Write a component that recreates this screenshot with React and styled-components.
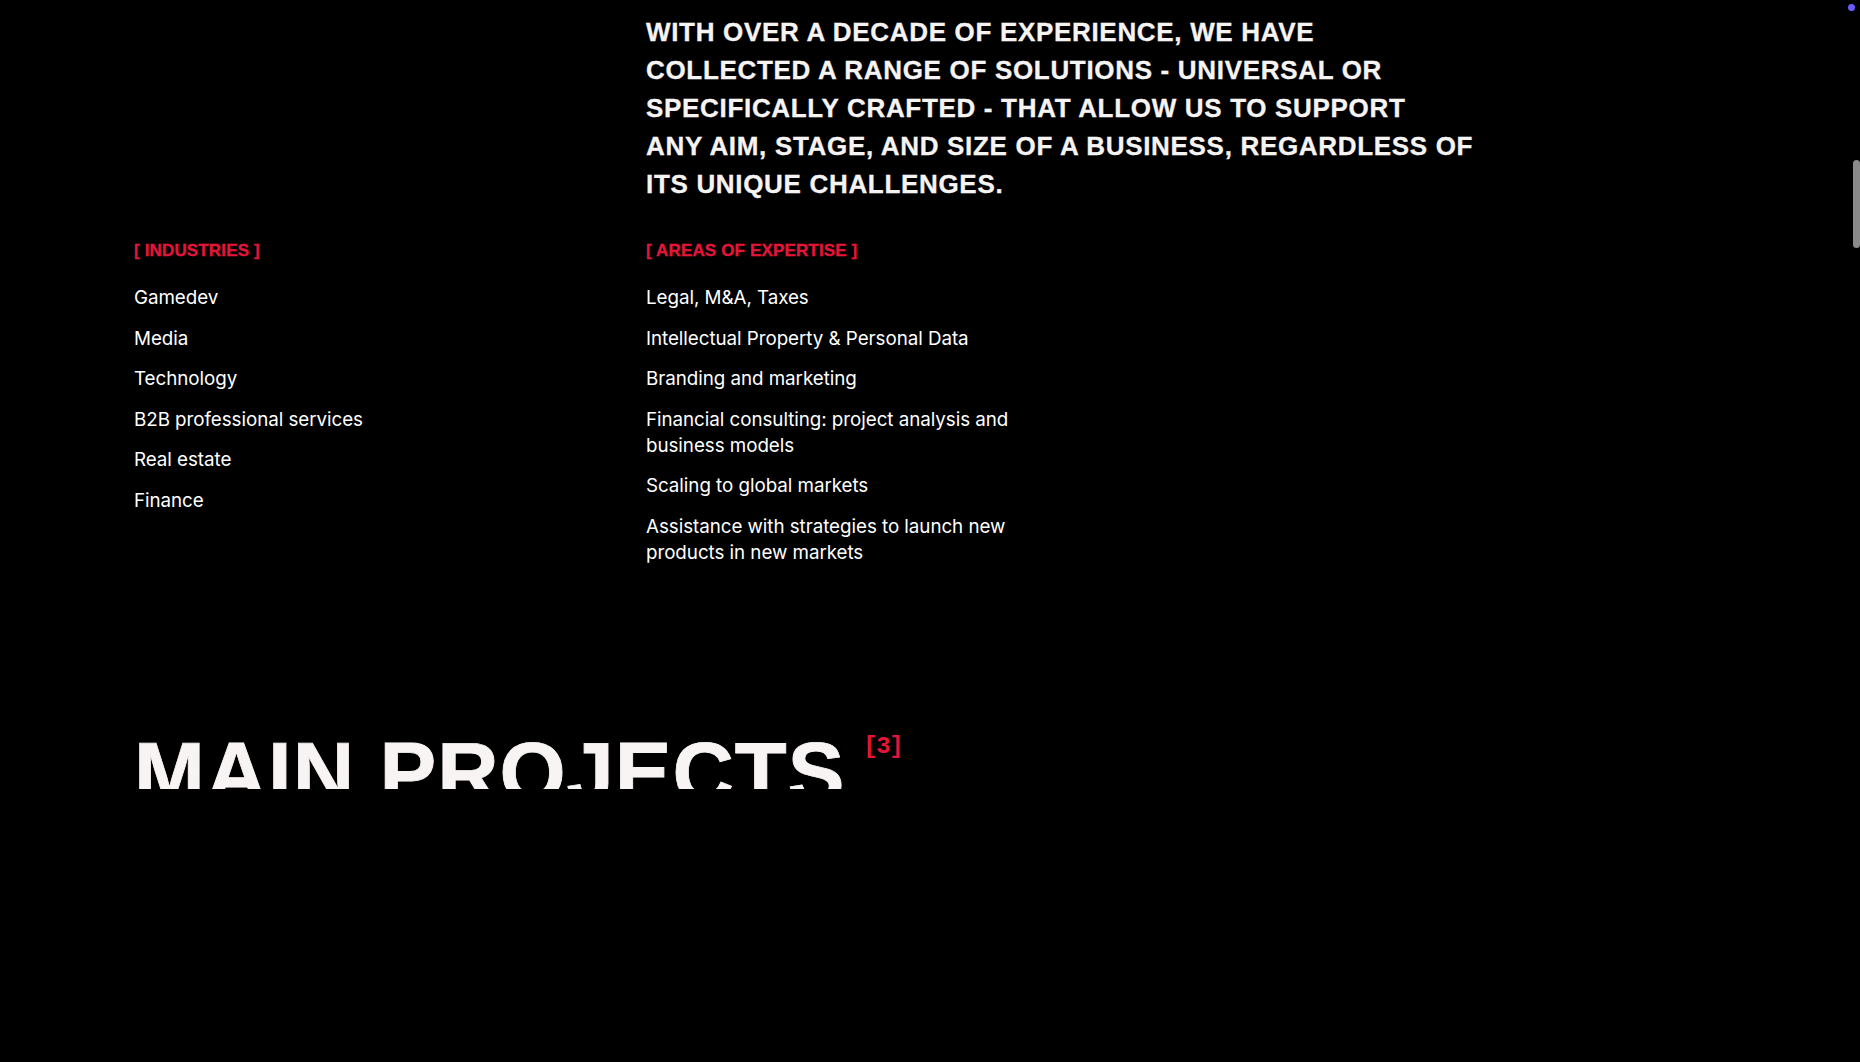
import React from "react";
import styled, { createGlobalStyle } from "styled-components";

const GlobalStyle = createGlobalStyle`
  html, body {
    margin: 0;
    padding: 0;
    background: #000;
  }
  body {
    font-family: Inter, "Liberation Sans", Arial, sans-serif;
    color: #fff;
    overflow: hidden;
  }
  * { box-sizing: border-box; }
`;

const Page = styled.main`
  min-height: 100vh;
  background: #000;
  padding: 13px 0 0 134px;
`;

const Intro = styled.section`
  display: grid;
  grid-template-columns: 512px 1fr;
`;

const Statement = styled.h2`
  grid-column: 2;
  margin: 0;
  font-family: "Liberation Sans", Arial, sans-serif;
  font-weight: 700;
  font-size: 26px;
  line-height: 38px;
  letter-spacing: 0.68px;
  text-transform: uppercase;
  color: #f6f3f3;
  -webkit-text-stroke: 0.3px #f6f3f3;
`;

const StatementLine = styled.span`
  display: block;
  white-space: nowrap;
`;

const Lists = styled.section`
  display: grid;
  grid-template-columns: 512px 400px;
  margin-top: 38px;
`;

const Column = styled.div`
  display: flex;
  flex-direction: column;
`;

const Label = styled.h3`
  margin: 0 0 24px;
  font-family: "Liberation Sans", Arial, sans-serif;
  font-weight: 700;
  font-size: 17px;
  line-height: 20px;
  letter-spacing: 0.15px;
  text-transform: uppercase;
  color: #e5153a;
  -webkit-text-stroke: 0.3px #e5153a;
`;

const List = styled.ul`
  list-style: none;
  margin: 0;
  padding: 0;
  display: flex;
  flex-direction: column;
  gap: 14.5px;
`;

const Item = styled.li`
  font-family: Inter, "Liberation Sans", Arial, sans-serif;
  font-size: 18.8px;
  line-height: 26px;
  font-weight: 400;
  letter-spacing: -0.05px;
  color: #fff;
`;

const TitleRow = styled.div`
  display: flex;
  align-items: flex-start;
  gap: 18px;
  margin-top: 164px;
`;

const TitleMask = styled.div`
  height: 59px;
  overflow: hidden;
`;

const Title = styled.h2`
  margin: 0;
  font-family: "Liberation Sans", Arial, sans-serif;
  font-weight: 700;
  font-size: 85px;
  line-height: 85px;
  letter-spacing: 0.95px;
  text-transform: uppercase;
  color: #f8f4f4;
  white-space: nowrap;
  -webkit-text-stroke: 0.8px #f8f4f4;
`;

const Count = styled.span`
  margin-top: 5px;
  font-family: "Liberation Mono", "DejaVu Sans Mono", monospace;
  font-size: 24px;
  line-height: 24px;
  font-weight: 700;
  letter-spacing: -1.5px;
  color: #e5153a;
`;

const ScrollThumb = styled.div`
  position: fixed;
  right: 0;
  top: 160px;
  width: 7px;
  height: 88px;
  border-radius: 4px;
  background: #8a8a8a;
`;

const CursorDot = styled.div`
  position: fixed;
  right: 5px;
  top: 4px;
  width: 7px;
  height: 7px;
  border-radius: 50%;
  background: #6a5cff;
`;

const statement = [
  "With over a decade of experience, we have",
  "collected a range of solutions - universal or",
  "specifically crafted - that allow us to support",
  "any aim, stage, and size of a business, regardless of",
  "its unique challenges.",
];

const industries = [
  "Gamedev",
  "Media",
  "Technology",
  "B2B professional services",
  "Real estate",
  "Finance",
];

const expertise = [
  "Legal, M&A, Taxes",
  "Intellectual Property & Personal Data",
  "Branding and marketing",
  "Financial consulting: project analysis and business models",
  "Scaling to global markets",
  "Assistance with strategies to launch new products in new markets",
];

export default function App() {
  return (
    <>
      <GlobalStyle />
      <Page>
        <Intro>
          <Statement>
            {statement.map((l) => (
              <StatementLine key={l}>{l}</StatementLine>
            ))}
          </Statement>
        </Intro>
        <Lists>
          <Column>
            <Label>[ Industries ]</Label>
            <List>
              {industries.map((i) => (
                <Item key={i}>{i}</Item>
              ))}
            </List>
          </Column>
          <Column>
            <Label>[ Areas of expertise ]</Label>
            <List>
              {expertise.map((i) => (
                <Item key={i}>{i}</Item>
              ))}
            </List>
          </Column>
        </Lists>
        <TitleRow>
          <TitleMask>
            <Title>Main projects</Title>
          </TitleMask>
          <Count>[3]</Count>
        </TitleRow>
      </Page>
      <ScrollThumb />
      <CursorDot />
    </>
  );
}
